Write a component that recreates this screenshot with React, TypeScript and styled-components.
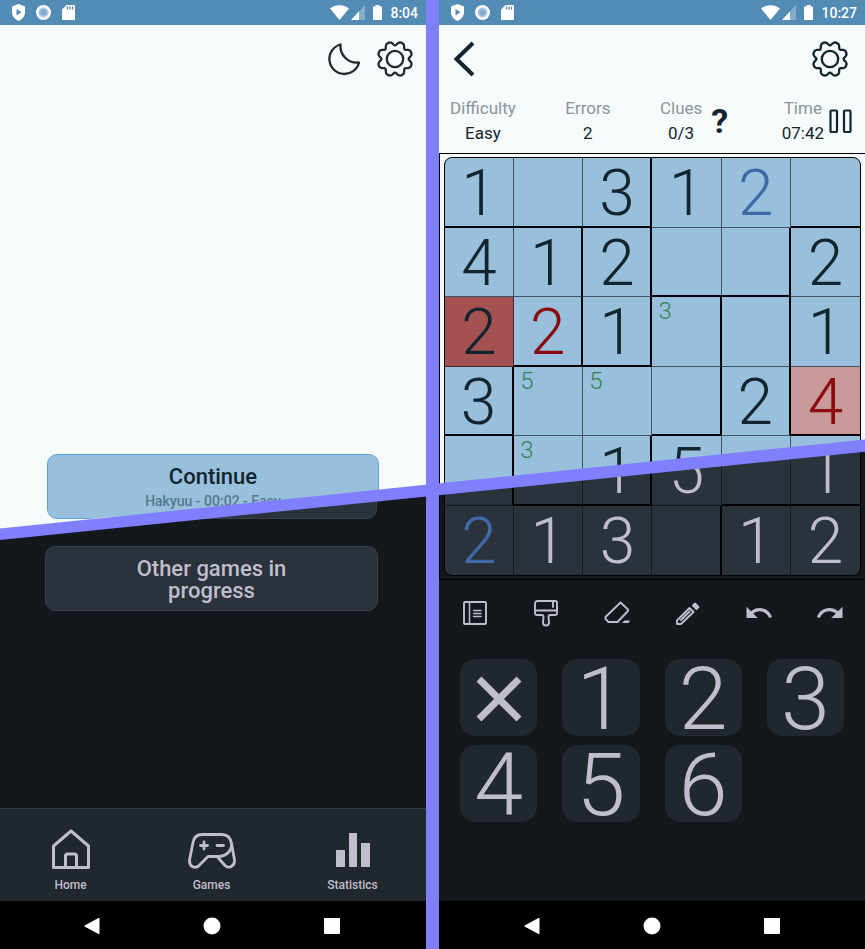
import React from "react";
import styled, { createGlobalStyle, css } from "styled-components";

const c = {
  accent: "#8080ff",
  light: "#f6fafb",
  dark: "#14181c",
  bar: "#528bb4",
  cellLight: "#98c0dc",
  cellDark: "#2a323b",
  panel: "#20272d",
  ink: "#12252e",
  chalk: "#c0becc",
  blue: "#4069a8",
  red: "#8a0a0e",
  green: "#3a7f55",
};

const Global = createGlobalStyle`
  * { box-sizing: border-box; }
  body { margin: 0; background: ${c.dark}; font-family: Roboto, "Liberation Sans", sans-serif; }
  button { font: inherit; color: inherit; background: none; border: 0; padding: 0; margin: 0; cursor: pointer; }
  svg { display: block; }
`;

const Page = styled.main`
  position: relative;
  isolation: isolate;
  display: grid;
  grid-template-columns: minmax(0, 1fr) 13px minmax(0, 1fr);
  min-height: 100vh;
  background: ${c.dark};
  &::before {
    content: "";
    position: absolute;
    inset: 0;
    z-index: -1;
    background: ${c.light};
    clip-path: polygon(0 0, 100% 0, 100% 47%, 0 56.3%);
  }
`;

const Slash = styled.div`
  position: absolute;
  inset: 0;
  z-index: 2;
  pointer-events: none;
  background: ${c.accent};
  clip-path: polygon(0 55.7%, 100% 46.3%, 100% 47.6%, 0 56.9%);
`;

const Divider = styled.div`
  background: ${c.accent};
`;

const Phone = styled.section`
  display: flex;
  flex-direction: column;
`;

const StatusRow = styled.header`
  display: flex;
  align-items: center;
  height: 25px;
  padding: 0 8px 0 12px;
  background: ${c.bar};
  color: #fff;
  font-size: 14px;
  font-weight: 500;
`;

const StatusIcons = styled.div`
  display: flex;
  align-items: center;
  gap: 11px;
  margin-right: auto;
`;

const Signals = styled.div`
  display: flex;
  align-items: center;
  gap: 2px;
  margin-right: 8px;
`;

const TopBar = styled.div`
  display: flex;
  align-items: center;
  justify-content: flex-end;
  gap: 14px;
  height: 67px;
  padding: 0 12px 0 14px;
  color: #22282b;
`;

const GameTopBar = styled(TopBar)`
  justify-content: space-between;
  padding-right: 16px;
  color: ${c.ink};
`;

const Menu = styled.div`
  display: flex;
  flex-direction: column;
  gap: 27px;
  margin-top: auto;
  padding-bottom: 197px;
`;

const MenuButton = styled.button`
  display: flex;
  flex-direction: column;
  align-items: center;
  justify-content: center;
  width: 78%;
  height: 65px;
  border-radius: 10px;
  font-size: 22px;
  font-weight: 500;
  line-height: 22px;
`;

const OtherButton = styled(MenuButton)`
  align-self: center;
  margin-right: 3px;
  padding: 2px 80px 0;
  background: ${c.cellDark};
  border: 1px solid #3b3f46;
  color: ${c.chalk};
`;

const ContinueButton = styled(MenuButton)`
  position: relative;
  isolation: isolate;
  align-self: center;
  color: ${c.ink};
  padding-top: 2px;
  gap: 4px;
  &::before,
  &::after {
    content: "";
    position: absolute;
    inset: 0;
    z-index: -1;
    border-radius: 10px;
  }
  &::before {
    background: ${c.cellLight};
    border: 1px solid #5aa4da;
    clip-path: polygon(0 0, 100% 0, 100% 63%, 12% 100%, 0 100%);
  }
  &::after {
    left: -2px;
    right: 2px;
    background: ${c.cellDark};
    border: 1px solid #3b3f46;
    clip-path: polygon(100% 63%, 100% 100%, 34% 100%, 34% 94%);
  }
`;

const Detail = styled.span`
  font-size: 14px;
  line-height: 18px;
  color: #55788d;
`;

const TabBar = styled.nav`
  display: grid;
  grid-template-columns: repeat(3, 1fr);
  height: 93px;
  padding: 19px 3px 0 0;
  background: ${c.panel};
  border-top: 1px solid #3b3f46;
  color: ${c.chalk};
`;

const Tab = styled.button`
  display: flex;
  flex-direction: column;
  align-items: center;
  align-self: start;
  gap: 6px;
  font-size: 12px;
  font-weight: 500;
  line-height: 18px;
`;

const SystemBar = styled.footer<{ $inset: number }>`
  display: flex;
  justify-content: center;
  align-items: center;
  gap: 102px;
  height: 48px;
  padding: 2px ${(p) => p.$inset}px 0 0;
  background: #000;
  color: #fff;
`;

const Stats = styled.div`
  display: flex;
  justify-content: space-between;
  padding: 4px 12px 7px 11px;
  font-size: 17px;
  line-height: 25px;
  color: ${c.ink};
`;

const StatGroup = styled.div`
  display: flex;
  align-items: center;
  gap: 5px;
`;

const Stat = styled.div`
  display: flex;
  flex-direction: column;
  align-items: center;
`;

const StatLabel = styled.span`
  color: #8a9599;
`;

const HelpButton = styled.button`
  margin: 0 4px;
  font-size: 34px;
  font-weight: 700;
  line-height: 34px;
`;

const BoardFrame = styled.div`
  padding: 3px 4px;
  border: solid #000;
  border-width: 1px 0 1px 1px;
`;

const Board = styled.div`
  position: relative;
  isolation: isolate;
  display: grid;
  grid-template-columns: repeat(6, 1fr);
  grid-template-rows: repeat(6, 1fr);
  aspect-ratio: 417 / 419;
  border: 1px solid #000;
  border-radius: 8px;
  background: ${c.cellDark};
  &::before {
    content: "";
    position: absolute;
    inset: 0;
    z-index: -1;
    border-radius: 7px;
    background: ${c.cellLight};
    clip-path: polygon(0 0, 100% 0, 100% 69%, 0 79.2%);
  }
`;

type Edge = "none" | "thin" | "thick";
const edge = (e: Edge) =>
  e === "thick" ? "2px solid #000" : e === "thin" ? "1px solid rgba(6, 10, 16, 0.6)" : "0";

const Cell = styled.button<{ $right: Edge; $bottom: Edge; $fill?: string }>`
  display: flex;
  justify-content: center;
  min-width: 0;
  min-height: 0;
  border-right: ${(p) => edge(p.$right)};
  border-bottom: ${(p) => edge(p.$bottom)};
  background: ${(p) => p.$fill ?? "transparent"};
`;

const Digit = styled.span<{ $color: string; $split?: number }>`
  height: 100%;
  font-size: 64px;
  font-weight: 300;
  line-height: 72px;
  color: ${(p) => p.$color};
  ${(p) =>
    p.$split !== undefined &&
    css`
      color: transparent;
      background: linear-gradient(${c.ink} ${p.$split}%, ${c.chalk} ${p.$split}%);
      background-clip: text;
      -webkit-background-clip: text;
    `}
`;

const Note = styled.span`
  margin-right: auto;
  padding-left: 6px;
  font-size: 24px;
  font-weight: 300;
  line-height: 28px;
  color: ${c.green};
`;

const Tools = styled.div`
  display: grid;
  grid-template-columns: repeat(6, 1fr);
  height: 66px;
  color: ${c.chalk};
`;

const Tool = styled.button`
  display: flex;
  align-items: center;
  justify-content: center;
`;

const Keypad = styled.div`
  display: grid;
  grid-template-columns: repeat(4, 1fr);
  gap: 9px 25px;
  margin-bottom: auto;
  padding: 13px 21px;
  color: ${c.chalk};
`;

const Key = styled.button`
  display: flex;
  align-items: center;
  justify-content: center;
  height: 77px;
  padding-top: 2px;
  border-radius: 15px;
  background: ${c.panel};
  font-size: 88px;
  font-weight: 300;
  line-height: 77px;
`;

const gearPath = (() => {
  const pts: string[] = [];
  for (let i = 0; i < 160; i++) {
    const a = (i / 160) * Math.PI * 2;
    const dip = Math.pow((1 + Math.cos(8 * a)) / 2, 1.7);
    const r = 17.4 - 3.8 * dip;
    pts.push(`${(19 + r * Math.cos(a)).toFixed(2)} ${(19 + r * Math.sin(a)).toFixed(2)}`);
  }
  return `M${pts.join("L")}Z`;
})();

const Gear = () => (
  <svg width="38" height="38" viewBox="0 0 38 38" fill="none" stroke="currentColor" strokeWidth="2.3" strokeLinejoin="round">
    <path d={gearPath} />
    <circle cx="19" cy="19" r="8.2" />
  </svg>
);

const Moon = () => (
  <svg width="36" height="36" viewBox="0 0 36 36" fill="none" stroke="currentColor" strokeWidth="2.3" strokeLinejoin="round">
    <path d="M14.5 3.5A15 15 0 1 0 33 21.500A16.500 16.500 0 0 1 14.500 3.500Z" />
  </svg>
);

const Status = ({ time }: { time: string }) => (
  <StatusRow>
    <StatusIcons>
      <svg width="13" height="17" viewBox="0 0 13 17">
        <path d="M6.500 0L13 2.500V8c0 4-2.700 7.500-6.500 9C2.700 15.500 0 12 0 8V2.500Z" fill="#fff" />
        <path d="M4.500 5v6.500l5-3.200z" fill={c.bar} />
      </svg>
      <svg width="15" height="15" viewBox="0 0 15 15">
        <circle cx="7.500" cy="7.500" r="7.500" fill="#fff" />
        <circle cx="7.500" cy="7.500" r="5" fill="#a9c5da" />
        <circle cx="7.500" cy="7.500" r="3" fill="#80aac9" />
      </svg>
      <svg width="13" height="15" viewBox="0 0 13 15">
        <path d="M4.500 0H12a1 1 0 0 1 1 1v13a1 1 0 0 1-1 1H1a1 1 0 0 1-1-1V4.500z" fill="#fff" />
        <path d="M5.500 1.500v3M8 1.500v3M10.500 1.500v3" stroke={c.bar} strokeWidth="1.300" />
      </svg>
    </StatusIcons>
    <Signals>
      <svg width="19" height="15" viewBox="0 0 19 15">
        <path d="M9.500 15L0 3.500C5-1 14-1 19 3.500z" fill="#fff" />
      </svg>
      <svg width="14" height="15" viewBox="0 0 14 15">
        <path d="M0 15L14 0v15z" fill="#86aecb" />
        <path d="M0 15L8 6.500V15z" fill="#fff" />
      </svg>
    </Signals>
    <Signals>
      <svg width="9" height="15" viewBox="0 0 9 15">
        <path d="M2.500 0h4v1.500H9V15H0V1.500h2.500z" fill="#fff" />
      </svg>
    </Signals>
    <span>{time}</span>
  </StatusRow>
);

const System = ({ inset = 0 }: { inset?: number }) => (
  <SystemBar $inset={inset}>
    <button aria-label="Back">
      <svg width="18" height="18" viewBox="0 0 18 18" fill="currentColor">
        <path d="M2 8.300L15.500 1a.7.7 0 0 1 1 .6V16.500a.7.7 0 0 1-1 .6L2 9.700a.8.8 0 0 1 0-1.400z" />
      </svg>
    </button>
    <button aria-label="Home screen">
      <svg width="18" height="18" viewBox="0 0 18 18" fill="currentColor">
        <circle cx="9" cy="9" r="8.500" />
      </svg>
    </button>
    <button aria-label="Recent apps">
      <svg width="18" height="18" viewBox="0 0 18 18" fill="currentColor">
        <rect x="1" y="1" width="16" height="16" rx="1" />
      </svg>
    </button>
  </SystemBar>
);

type CellData = { v?: string; note?: string; color?: string; fill?: string; split?: number };
const d = (v: string, rest: Omit<CellData, "v"> = {}): CellData => ({ v, ...rest });
const e: CellData = {};
const k = { color: c.chalk };

const cells: CellData[][] = [
  [d("1"), e, d("3"), d("1"), d("2", { color: c.blue }), e],
  [d("4"), d("1"), d("2"), e, e, d("2")],
  [d("2", { fill: "#a65151" }), d("2", { color: c.red }), d("1"), { note: "3" }, e, d("1")],
  [d("3"), { note: "5" }, { note: "5" }, e, d("2"), d("4", { color: c.red, fill: "#c99a9a" })],
  [e, { note: "3" }, d("1", { split: 48 }), d("5", { split: 39 }), e, d("1", { split: 18 })],
  [d("2", { color: c.blue }), d("1", k), d("3", k), e, d("1", k), d("2", k)],
];

/* "#" marks a region wall, "." a plain grid line */
const rightWalls = ["..#..", ".##.#", ".####", "#..##", "#.#..", "...#."];
const bottomWalls = ["###..#", "...##.", ".##...", "#..#.#", ".##.##"];

const wall = (s?: string): Edge => (s === "#" ? "thick" : s === "." ? "thin" : "none");

const Puzzle = () => (
  <BoardFrame>
    <Board>
      {cells.map((row, r) =>
        row.map((cell, i) => (
          <Cell
            key={`${r}-${i}`}
            aria-label={`Row ${r + 1}, column ${i + 1}`}
            $right={wall(rightWalls[r][i])}
            $bottom={wall(bottomWalls[r]?.[i])}
            $fill={cell.fill}
          >
            {cell.v && (
              <Digit $color={cell.color ?? c.ink} $split={cell.split}>
                {cell.v}
              </Digit>
            )}
            {cell.note && <Note>{cell.note}</Note>}
          </Cell>
        ))
      )}
    </Board>
  </BoardFrame>
);

const stroke = { fill: "none", stroke: "currentColor", strokeWidth: 1.9, strokeLinejoin: "round", strokeLinecap: "round" } as const;

const Toolbar = () => (
  <Tools>
    <Tool aria-label="Rules">
      <svg width="28" height="28" viewBox="0 0 28 28" {...stroke}>
        <rect x="3" y="3" width="22" height="22" rx="1" />
        <path d="M8.500 3v22M12.500 11.500h7.500M12.500 14.500h7.500M12.500 17.500h7.500" strokeWidth="1.500" />
      </svg>
    </Tool>
    <Tool aria-label="Paint">
      <svg width="28" height="28" viewBox="0 0 28 28" {...stroke}>
        <path d="M5.500 2H23a2 2 0 0 1 2 2v10a2 2 0 0 1-2 2h-4.500c-1.500 0-2 1-2 2l.5 5.500a3 3 0 0 1-6 0l.5-5.500c0-1-.5-2-2-2H5a2 2 0 0 1-2-2V4.500A2.500 2.500 0 0 1 5.500 2zM3 11.500h22M21 2v6" />
      </svg>
    </Tool>
    <Tool aria-label="Erase">
      <svg width="28" height="28" viewBox="0 0 28 28" {...stroke}>
        <path d="M17.500 3.500L25 10.500v1.500L14.500 23H5.500l-3-3v-2z" />
        <path d="M19 24L21.500 21.500H27L25.500 24z" fill="currentColor" stroke="none" />
      </svg>
    </Tool>
    <Tool aria-label="Notes">
      <svg width="28" height="28" viewBox="0 0 28 28" {...stroke}>
        <path d="M3 21.500L15.500 9l4 4L7 25H3zM7 21l8.500-8.500" />
        <path d="M19 6.500L21 4.500 24.500 8 22.500 10z" fill="currentColor" />
      </svg>
    </Tool>
    <Tool aria-label="Undo">
      <svg width="30" height="30" viewBox="0 0 24 24" fill="currentColor">
        <path d="M12.500 8c-2.650 0-5.050.99-6.900 2.600L2 7v9h9l-3.620-3.620c1.390-1.160 3.160-1.880 5.120-1.880 3.540 0 6.550 2.310 7.600 5.500l2.370-.78C21.080 11.030 17.150 8 12.500 8z" />
      </svg>
    </Tool>
    <Tool aria-label="Redo">
      <svg width="30" height="30" viewBox="0 0 24 24" fill="currentColor">
        <path d="M18.400 10.600C16.550 8.990 14.150 8 11.500 8c-4.650 0-8.580 3.030-9.960 7.220L3.900 16c1.050-3.190 4.050-5.500 7.600-5.500 1.950 0 3.730.72 5.120 1.880L13 16h9V7l-3.600 3.600z" />
      </svg>
    </Tool>
  </Tools>
);

const HomePhone = () => (
  <Phone>
    <Status time="8:04" />
    <TopBar>
      <button aria-label="Dark mode"><Moon /></button>
      <button aria-label="Settings"><Gear /></button>
    </TopBar>
    <Menu>
      <ContinueButton>
        Continue
        <Detail>Hakyuu - 00:02 - Easy</Detail>
      </ContinueButton>
      <OtherButton>Other games in progress</OtherButton>
    </Menu>
    <TabBar>
      <Tab>
        <svg width="40" height="42" viewBox="0 0 40 42" fill="none" stroke="currentColor" strokeWidth="3" strokeLinejoin="round">
          <path d="M20 3L37.500 18V39.500H2.500V18zM14.500 39V28a2 2 0 0 1 2-2h7a2 2 0 0 1 2 2v11" />
        </svg>
        Home
      </Tab>
      <Tab>
        <svg width="48" height="42" viewBox="0 -5 48 42" fill="none" stroke="currentColor" strokeWidth="2.800" strokeLinejoin="round" strokeLinecap="round">
          <path d="M14 1.500H34c5 0 8.500 3.500 9.500 9L46.500 27c.5 6.500-6 9-9.500 5.500L29 23.500H20L11 32.500C7.500 36 1 34 1.500 27L5 9.500C6 4 9 1.500 14 1.500z" />
          <path d="M43.500 11C44 18 38 23.500 30 23.500" />
          <path d="M12.500 12.500h7M16 9v7M29 12.500h6.500" />
        </svg>
        Games
      </Tab>
      <Tab>
        <svg width="36" height="42" viewBox="0 0 36 42" fill="currentColor">
          <path d="M1 22h9v17H1zM14 5h8v34h-8zM26 15h9v24h-9z" />
        </svg>
        Statistics
      </Tab>
    </TabBar>
    <System inset={3} />
  </Phone>
);

const GamePhone = () => (
  <Phone>
    <Status time="10:27" />
    <GameTopBar>
      <button aria-label="Go back">
        <svg width="24" height="36" viewBox="0 0 24 36" fill="none" stroke="currentColor" strokeWidth="4">
          <path d="M20 2L3.500 18 20 34" />
        </svg>
      </button>
      <button aria-label="Settings"><Gear /></button>
    </GameTopBar>
    <Stats>
      <Stat><StatLabel>Difficulty</StatLabel>Easy</Stat>
      <Stat><StatLabel>Errors</StatLabel>2</Stat>
      <StatGroup>
        <Stat><StatLabel>Clues</StatLabel>0/3</Stat>
        <HelpButton aria-label="Use a clue">?</HelpButton>
      </StatGroup>
      <StatGroup>
        <Stat><StatLabel>Time</StatLabel>07:42</Stat>
        <button aria-label="Pause">
          <svg width="24" height="24" viewBox="0 0 24 24" fill="none" stroke="currentColor" strokeWidth="2.200">
            <rect x="1.500" y="1.500" width="6.500" height="21.500" rx="1" />
            <rect x="15" y="1.500" width="6.500" height="21.500" rx="1" />
          </svg>
        </button>
      </StatGroup>
    </Stats>
    <Puzzle />
    <Toolbar />
    <Keypad>
      <Key aria-label="Clear cell">
        <svg width="48" height="48" viewBox="0 0 48 48" fill="none" stroke="currentColor" strokeWidth="7">
          <path d="M4 4L44 44M44 4L4 44" />
        </svg>
      </Key>
      {["1", "2", "3", "4", "5", "6"].map((n) => (
        <Key key={n}>{n}</Key>
      ))}
    </Keypad>
    <System />
  </Phone>
);

export default function App() {
  return (
    <>
      <Global />
      <Page>
        <HomePhone />
        <Divider />
        <GamePhone />
        <Slash />
      </Page>
    </>
  );
}
